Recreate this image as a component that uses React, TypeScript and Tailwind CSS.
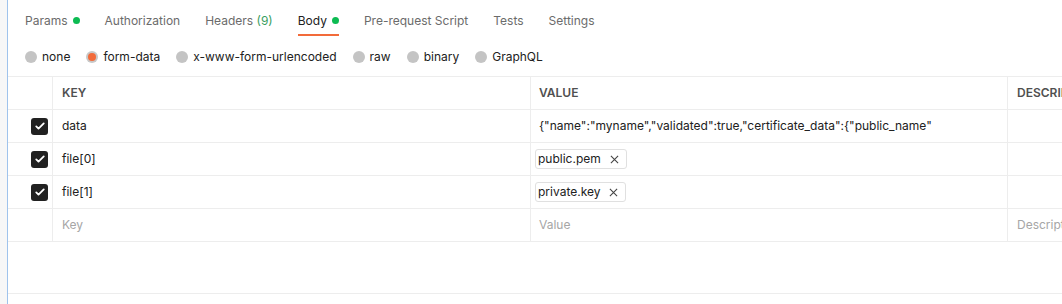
import React from 'react'

const tabs = [
  { label: 'Params', dot: true },
  { label: 'Authorization' },
  { label: 'Headers', count: '(9)' },
  { label: 'Body', dot: true, active: true },
  { label: 'Pre-request Script' },
  { label: 'Tests' },
  { label: 'Settings' },
]

const bodyTypes = ['none', 'form-data', 'x-www-form-urlencoded', 'raw', 'binary', 'GraphQL']

function Check() {
  return (
    <div className="w-[17px] h-[17px] rounded-[3px] bg-[#212121] flex items-center justify-center">
      <svg viewBox="0 0 16 16" className="w-[12px] h-[12px]" fill="none">
        <path d="M3 8.5l3 3 7-7" stroke="white" strokeWidth="2.4" strokeLinecap="round" strokeLinejoin="round" />
      </svg>
    </div>
  )
}

function Chip({ name }: { name: string }) {
  return (
    <span className="inline-flex items-center gap-[9px] h-[20px] pl-[2px] pr-[7px] border border-[#e0e0e0] rounded-[3px] text-[#212121]">
      {name}
      <svg viewBox="0 0 10 10" className="w-[9px] h-[9px]" fill="none">
        <path d="M1 1l8 8M9 1l-8 8" stroke="#444" strokeWidth="1.2" />
      </svg>
    </span>
  )
}

const rows = [
  { key: 'data', value: '{"name":"myname","validated":true,"certificate_data":{"public_name"' },
  { key: 'file[0]', file: 'public.pem' },
  { key: 'file[1]', file: 'private.key' },
]

export default function App() {
  return (
    <div className="w-[1062px] h-[304px] flex bg-white overflow-hidden text-[12px]" style={{ fontFamily: 'Inter, "Noto Sans", sans-serif' }}>
      {/* left gutter */}
      <div className="w-[8px] shrink-0 bg-[#f7f7f7] border-r border-[#9fc3ec]" />
      <div className="flex-1 min-w-0 flex flex-col">
        {/* Tabs */}
        <div className="flex items-start h-[38px] pl-[17px] pt-[12px] gap-[25px]">
          {tabs.map((t) => (
            <div key={t.label} className="flex flex-col">
              <div className={`flex items-center gap-[5px] h-[17px] ${t.active ? 'text-[#212121]' : 'text-[#6b6b6b]'}`}>
                <span>
                  {t.label}
                  {t.count && <span className="text-[#3a9e5f]"> {t.count}</span>}
                </span>
                {t.dot && <span className="w-[7px] h-[7px] rounded-full bg-[#0cbb52]" />}
              </div>
              {t.active && <div className="h-[2px] bg-[#f26b3a] mt-[5px]" />}
            </div>
          ))}
        </div>
        {/* Body types */}
        <div className="flex items-center h-[38px] pl-[17px] gap-[16px]">
          {bodyTypes.map((b) => (
            <div key={b} className="flex items-center gap-[5px] text-[#212121]">
              {b === 'form-data' ? (
                <span className="w-[12px] h-[12px] rounded-full bg-[#c8c8c8] flex items-center justify-center">
                  <span className="w-[8px] h-[8px] rounded-full bg-[#f26b3a]" />
                </span>
              ) : (
                <span className="w-[12px] h-[12px] rounded-full bg-[#c4c4c4]" />
              )}
              <span>{b}</span>
            </div>
          ))}
        </div>
        {/* Table */}
        <div className="border-t border-[#ededed]">
          <div className="grid grid-cols-[44px_478px_477px_1fr] h-[33px] border-b border-[#ededed] font-semibold text-[12px] text-[#505050]">
            <div />
            <div className="border-l border-[#ededed] pl-[9px] flex items-center">KEY</div>
            <div className="border-l border-[#ededed] pl-[8px] flex items-center">VALUE</div>
            <div className="border-l border-[#ededed] pl-[9px] flex items-center whitespace-nowrap">DESCRIPTION</div>
          </div>
          {rows.map((r) => (
            <div key={r.key} className="grid grid-cols-[44px_478px_477px_1fr] h-[33px] border-b border-[#ededed] text-[#212121]">
              <div className="flex items-center pl-[23px]">
                <Check />
              </div>
              <div className="border-l border-[#ededed] pl-[9px] flex items-center">{r.key}</div>
              <div className="border-l border-[#ededed] pl-[4px] flex items-center whitespace-nowrap overflow-hidden">
                {r.file ? <Chip name={r.file} /> : <span className="pl-[4px]">{r.value}</span>}
              </div>
              <div className="border-l border-[#ededed]" />
            </div>
          ))}
          <div className="grid grid-cols-[44px_478px_477px_1fr] h-[33px] border-b border-[#ededed] text-[#a6a6a6]">
            <div />
            <div className="border-l border-[#ededed] pl-[9px] flex items-center">Key</div>
            <div className="border-l border-[#ededed] pl-[8px] flex items-center">Value</div>
            <div className="border-l border-[#ededed] pl-[9px] flex items-center whitespace-nowrap">Description</div>
          </div>
          <div className="h-[52px] border-b border-[#ededed]" />
        </div>
      </div>
    </div>
  )
}
